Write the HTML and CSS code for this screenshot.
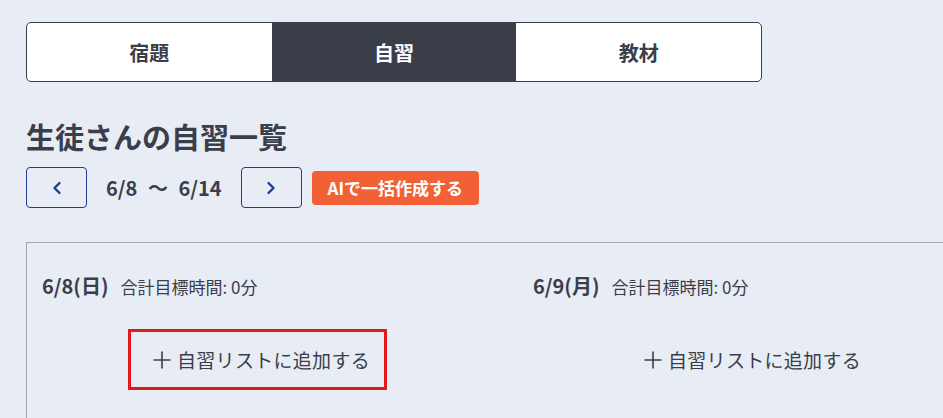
FILE: index.html
```html
<!DOCTYPE html>
<html lang="ja">
<head>
  <meta charset="utf-8">
  <title>自習一覧</title>
  <link rel="stylesheet" href="styles.css">
</head>
<body>
  <div class="page">
    <!-- Tabs -->
    <div class="tabs">
      <div class="tab">宿題</div>
      <div class="tab active">自習</div>
      <div class="tab">教材</div>
    </div>

    <h1 class="title">生徒さんの自習一覧</h1>

    <!-- Week navigation -->
    <div class="week-nav">
      <button class="nav-btn" aria-label="前の週">
        <svg width="12" height="14" viewBox="0 0 12 14"><polyline points="8.5,2 3.5,7 8.5,12" fill="none" stroke="#1d3d8f" stroke-width="2.4" stroke-linecap="round" stroke-linejoin="round"/></svg>
      </button>
      <span class="range">6/8 〜 6/14</span>
      <button class="nav-btn" aria-label="次の週">
        <svg width="12" height="14" viewBox="0 0 12 14"><polyline points="3.5,2 8.5,7 3.5,12" fill="none" stroke="#1d3d8f" stroke-width="2.4" stroke-linecap="round" stroke-linejoin="round"/></svg>
      </button>
      <button class="ai-btn">AIで一括作成する</button>
    </div>

    <!-- Days -->
    <div class="week">
      <div class="day">
        <div class="day-head">
          <span class="day-date">6/8(日)</span>
          <span class="day-total">合計目標時間: 0分</span>
        </div>
        <button class="add-btn highlight">
          <svg width="18" height="18" viewBox="0 0 18 18"><path d="M9 0.5V17.5M0.5 9H17.5" stroke="#3a3e49" stroke-width="1.6"/></svg>
          <span>自習リストに追加する</span>
        </button>
      </div>
      <div class="day">
        <div class="day-head">
          <span class="day-date">6/9(月)</span>
          <span class="day-total">合計目標時間: 0分</span>
        </div>
        <button class="add-btn">
          <svg width="18" height="18" viewBox="0 0 18 18"><path d="M9 0.5V17.5M0.5 9H17.5" stroke="#3a3e49" stroke-width="1.6"/></svg>
          <span>自習リストに追加する</span>
        </button>
      </div>
    </div>
  </div>
</body>
</html>
```

FILE: styles.css
```css
body {
  margin: 0;
  background-color: #e8ecf5;
  color: #3a3e49;
  font-family: "Noto Sans CJK JP", "Noto Sans", sans-serif;
  overflow: hidden;
}
.page {
  padding: 22px 0 0 26px;
}
.tabs {
  display: flex;
  width: 736px;
  height: 60px;
  border: 1px solid #3a3e49;
  border-radius: 5px;
  overflow: hidden;
  box-sizing: border-box;
  background-color: #ffffff;
}
.tab {
  flex: 1;
  display: flex;
  align-items: center;
  justify-content: center;
  font-size: 20px;
  font-weight: bold;
}
.tab.active {
  background-color: #3a3e49;
  color: #ffffff;
}
.title {
  margin: 34px 0 0 0;
  font-size: 29px;
  line-height: 40px;
  font-weight: bold;
}
.week-nav {
  display: flex;
  align-items: center;
  margin-top: 11px;
  height: 41px;
}
.nav-btn {
  width: 61px;
  height: 41px;
  border: 1px solid #1d3d8f;
  border-radius: 4px;
  background: transparent;
  display: flex;
  align-items: center;
  justify-content: center;
  padding: 0;
}
.range {
  margin: 0 19px;
  font-size: 20px;
  font-weight: bold;
  word-spacing: 6px;
}
.ai-btn {
  margin-left: 10px;
  height: 34px;
  padding: 0 16px;
  border: none;
  border-radius: 4px;
  background-color: #f26135;
  color: #ffffff;
  font-family: inherit;
  font-size: 17px;
  font-weight: bold;
}
.week {
  display: flex;
  margin-top: 34px;
  width: 1100px;
  height: 200px;
  border-top: 1px solid #a3a7b0;
  border-left: 1px solid #a3a7b0;
}
.day {
  width: 491px;
  box-sizing: border-box;
  padding: 28px 0 0 15px;
}
.day-head {
  display: flex;
  align-items: baseline;
  gap: 12px;
  line-height: 30px;
}
.day-date {
  font-size: 20px;
  font-weight: bold;
}
.day-total {
  font-size: 17px;
}
.add-btn {
  display: flex;
  align-items: center;
  justify-content: center;
  gap: 6px;
  margin: 27px 0 0 86px;
  width: 259px;
  height: 61px;
  border: 3px solid transparent;
  background: transparent;
  color: #3a3e49;
  font-family: inherit;
  font-size: 19px;
  letter-spacing: 0.3px;
  padding: 0 0 0 8px;
}
.add-btn.highlight {
  border-color: #e3191e;
}
```
